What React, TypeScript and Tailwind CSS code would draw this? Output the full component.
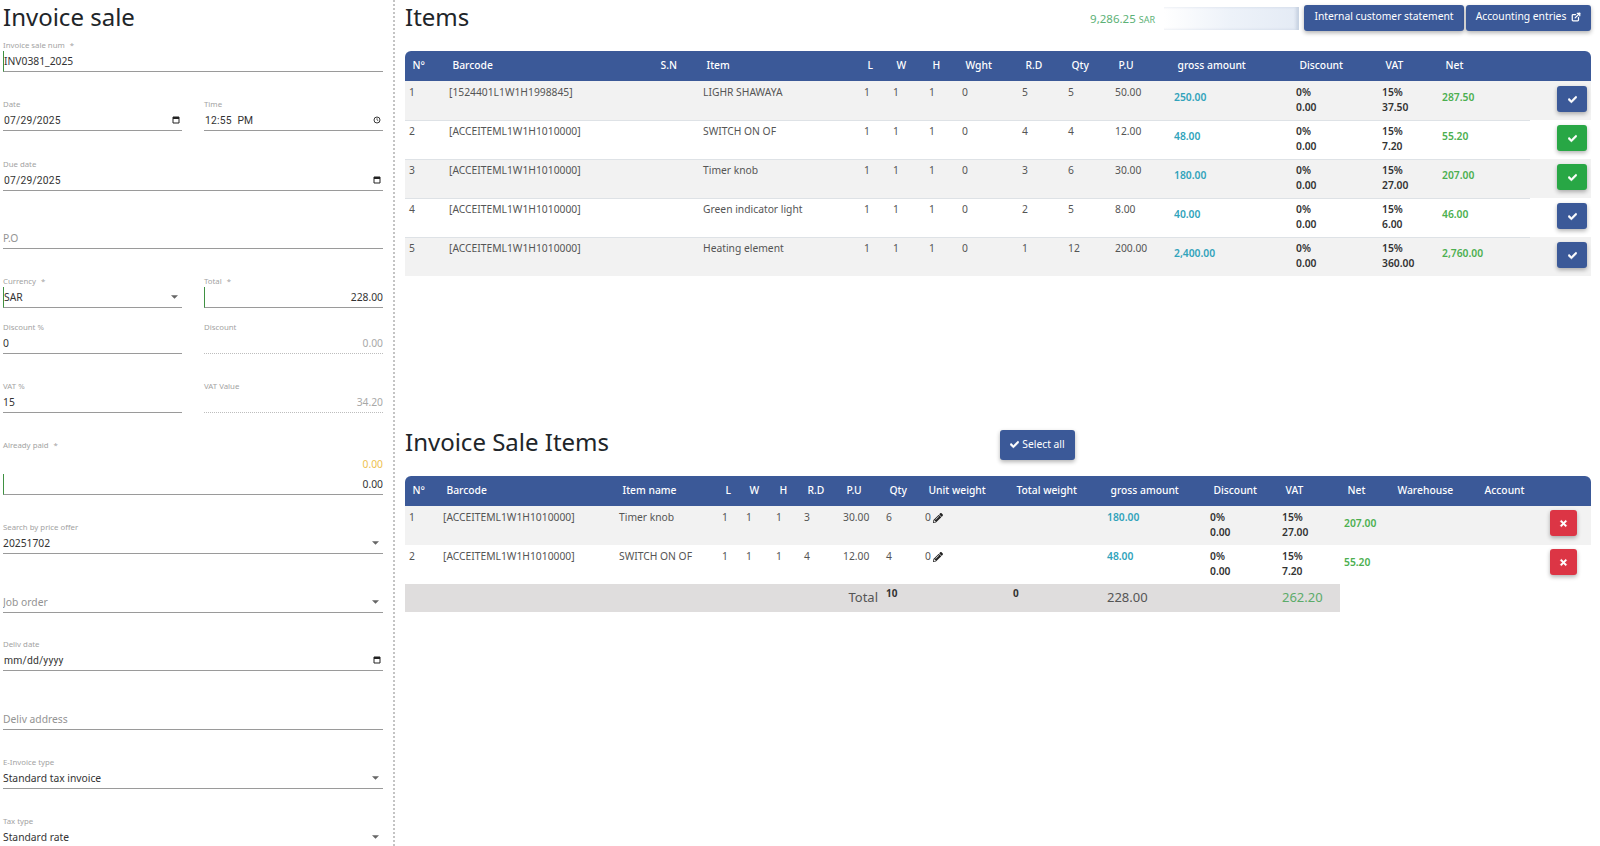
import React from "react";
import { FaCheck, FaTimes, FaPencilAlt } from "react-icons/fa";
import { ExternalLink } from "lucide-react";

const font = "font-['Noto_Sans',sans-serif]";

function CalendarIcon() {
  return (
    <svg viewBox="0 0 8 8" className="mr-[2px] h-[8px] w-[8px] shrink-0">
      <path d="M1 1h6v6H1z" fill="none" stroke="#222" strokeWidth="1" />
      <path d="M1 1h6v2H1z" fill="#222" />
    </svg>
  );
}
function ClockIcon() {
  return (
    <svg viewBox="0 0 8 8" className="mr-[2px] h-[8px] w-[8px] shrink-0">
      <circle cx="4" cy="4" r="3" fill="none" stroke="#222" strokeWidth="0.9" />
      <path d="M4 2.2V4l1.3.8" fill="none" stroke="#222" strokeWidth="0.7" />
    </svg>
  );
}
function Caret() {
  return (
    <svg viewBox="0 0 8 4" className="mr-[4px] h-[4px] w-[7px] shrink-0">
      <path d="M0 0h8L4 4z" fill="#666" />
    </svg>
  );
}

type FieldProps = {
  label?: string;
  value?: string;
  top: string;
  kind?: "text" | "placeholder" | "date";
  required?: boolean;
  marker?: boolean;
  disabled?: boolean;
  right?: boolean;
  icon?: React.ReactNode;
  extra?: React.ReactNode;
};

function Field({ label, value, top, kind = "text", required, marker, disabled, right, icon, extra }: FieldProps) {
  const valueClass =
    kind === "placeholder"
      ? "text-[#939393]"
      : disabled
        ? "text-[#a8a8a8]"
        : "text-[#333]";
  return (
    <div className={`min-w-0 flex-1 ${top}`}>
      <div className="flex h-[12px] items-center text-[7.8px] leading-[12px] text-[#a3a3a3]">
        {label}
        {required ? <span className="ml-[5px]">*</span> : null}
      </div>
      {extra}
      <div
        className={`flex h-[21px] items-center ${
          disabled ? "border-b border-dotted border-[#bdbdbd]" : "border-b border-[#9a9a9a]"
        } ${marker ? "border-l border-l-[#3f9142]" : ""}`}
      >
        <div
          className={`min-w-0 flex-1 truncate pt-[2px] ${right ? "text-right" : ""} ${
            kind === "date"
              ? "pl-px font-['Roboto',sans-serif] text-[10.3px] tracking-[0.2px] [word-spacing:3px]"
              : "text-[10.3px]"
          } ${valueClass}`}
        >
          {value}
        </div>
        {icon}
      </div>
    </div>
  );
}

const Row = ({ children }: { children: React.ReactNode }) => <div className="flex gap-[22px]">{children}</div>;

function ActionButton({ green }: { green?: boolean }) {
  return (
    <button
      className={`flex h-[26px] w-[30px] items-center justify-center rounded-[3px] text-white shadow-[0_2px_4px_rgba(0,0,0,0.3)] ${
        green ? "bg-[#28a745]" : "bg-[#3b5998]"
      }`}
    >
      <FaCheck className="h-[9px] w-[9px]" stroke="currentColor" strokeWidth={30} />
    </button>
  );
}

function RemoveButton() {
  return (
    <button className="flex h-[26px] w-[27px] items-center justify-center rounded-[3px] bg-[#dc3545] text-white shadow-[0_2px_4px_rgba(0,0,0,0.3)]">
      <FaTimes className="h-[9px] w-[9px]" stroke="currentColor" strokeWidth={30} />
    </button>
  );
}

const th = "bg-[#3b5998] pl-[7.5px] text-left text-[10.3px] font-medium text-white h-[30px] align-middle whitespace-nowrap";
const td = "pl-[4px] pt-[4px] pb-[4px] align-top text-[10.3px] leading-[15px] text-[#555] whitespace-nowrap";
const td1 = "pl-[4px] pt-[3px] pb-[5px] align-top text-[10.3px] leading-[15px] text-[#555] whitespace-nowrap";

const items = [
  { n: 1, code: "[1524401L1W1H1998845]", name: "LIGHR SHAWAYA", rd: 5, qty: 5, pu: "50.00", gross: "250.00", vat: "37.50", net: "287.50", green: false },
  { n: 2, code: "[ACCEITEML1W1H1010000]", name: "SWITCH ON OF", rd: 4, qty: 4, pu: "12.00", gross: "48.00", vat: "7.20", net: "55.20", green: true },
  { n: 3, code: "[ACCEITEML1W1H1010000]", name: "Timer knob", rd: 3, qty: 6, pu: "30.00", gross: "180.00", vat: "27.00", net: "207.00", green: true },
  { n: 4, code: "[ACCEITEML1W1H1010000]", name: "Green indicator light", rd: 2, qty: 5, pu: "8.00", gross: "40.00", vat: "6.00", net: "46.00", green: false },
  { n: 5, code: "[ACCEITEML1W1H1010000]", name: "Heating element", rd: 1, qty: 12, pu: "200.00", gross: "2,400.00", vat: "360.00", net: "2,760.00", green: false },
];

const saleItems = [
  { n: 1, code: "[ACCEITEML1W1H1010000]", name: "Timer knob", rd: 3, pu: "30.00", qty: 6, gross: "180.00", vat: "27.00", net: "207.00" },
  { n: 2, code: "[ACCEITEML1W1H1010000]", name: "SWITCH ON OF", rd: 4, pu: "12.00", qty: 4, gross: "48.00", vat: "7.20", net: "55.20" },
];

const itemHead = ["N°", "Barcode", "S.N", "Item", "L", "W", "H", "Wght", "R.D", "Qty", "P.U", "gross amount", "Discount", "VAT", "Net", ""];
const saleHead = ["N°", "Barcode", "Item name", "L", "W", "H", "R.D", "P.U", "Qty", "Unit weight", "Total weight", "gross amount", "Discount", "VAT", "Net", "Warehouse", "Account", ""];

function Head({ cells }: { cells: string[] }) {
  return (
    <thead>
      <tr>
        {cells.map((c, i) => (
          <th
            key={i}
            className={`${th} ${i === 0 ? "rounded-tl-md" : ""} ${i === cells.length - 1 ? "rounded-tr-md" : ""}`}
          >
            {c}
          </th>
        ))}
      </tr>
    </thead>
  );
}

function Stack({ a, b }: { a: string; b: string }) {
  return (
    <td className={`${td} font-semibold !text-[#333]`}>
      <div>{a}</div>
      <div>{b}</div>
    </td>
  );
}

export default function App() {
  return (
    <div className={`flex h-[846px] w-[1600px] overflow-hidden bg-white ${font}`}>
      <aside className="h-full w-[395px] shrink-0 border-r-2 border-dotted border-[#c4c4c4] pl-[3px] pr-[10px]">
        <h1 className="h-[39px] pt-[2px] text-[24px] leading-[29px] text-[#212529]">Invoice sale</h1>
        <Field top="" label="Invoice sale num" required marker value="INV0381_2025" />
        <Row>
          <Field top="mt-[26px]" label="Date" kind="date" value="07/29/2025" icon={<CalendarIcon />} />
          <Field top="mt-[26px]" label="Time" kind="date" value="12:55 PM" icon={<ClockIcon />} />
        </Row>
        <Field top="mt-[27px]" label="Due date" kind="date" value="07/29/2025" icon={<CalendarIcon />} />
        <Field top="mt-[25px]" kind="placeholder" value="P.O" />
        <Row>
          <Field top="mt-[26px]" label="Currency" required marker value="SAR" icon={<Caret />} />
          <Field top="mt-[26px]" label="Total" required marker right value="228.00" />
        </Row>
        <Row>
          <Field top="mt-[13px]" label="Discount %" value="0" />
          <Field top="mt-[13px]" label="Discount" disabled right value="0.00" />
        </Row>
        <Row>
          <Field top="mt-[26px]" label="VAT %" value="15" />
          <Field top="mt-[26px]" label="VAT Value" disabled right value="34.20" />
        </Row>
        <Field
          top="mt-[26px]"
          label="Already paid"
          required
          marker
          right
          value="0.00"
          extra={<div className="mb-[3px] mt-[6px] h-[14px] text-right text-[10.3px] leading-[14px] text-[#eec14f]">0.00</div>}
        />
        <Field top="mt-[26px]" label="Search by price offer" value="20251702" icon={<Caret />} />
        <Field top="mt-[26px]" kind="placeholder" value="Job order" icon={<Caret />} />
        <Field top="mt-[25px]" label="Deliv date" kind="date" value="mm/dd/yyyy" icon={<CalendarIcon />} />
        <Field top="mt-[26px]" kind="placeholder" value="Deliv address" />
        <Field top="mt-[26px]" label="E-Invoice type" value="Standard tax invoice" icon={<Caret />} />
        <Field top="mt-[26px]" label="Tax type" value="Standard rate" icon={<Caret />} />
      </aside>

      <main className="min-w-0 flex-1 pl-[10px] pr-[9px]">
        <div className="flex h-[51px] items-start">
          <h2 className="pt-[2px] text-[24px] leading-[29px] text-[#212529]">Items</h2>
          <div className="ml-auto mt-[5px] flex items-start">
            <div className="mr-[9px] mt-[5px] text-[11.5px] leading-[18px] text-[#5cb176]">
              9,286.25 <span className="text-[9px]">SAR</span>
            </div>
            <div className="mr-[5px] mt-[2px] h-[23px] w-[135px] bg-gradient-to-r from-white via-[#edf2f9] to-[#e4ebf5] shadow-[inset_-3px_0_3px_rgba(120,140,170,0.25)]" />
            <button className="h-[26px] w-[160px] rounded-[3px] bg-[#3b5998] pb-[2px] text-[10.3px] text-white shadow-[0_2px_4px_rgba(0,0,0,0.3)]">
              Internal customer statement
            </button>
            <button className="ml-[2px] flex h-[26px] w-[125px] items-center justify-center gap-[5px] rounded-[3px] bg-[#3b5998] pb-[2px] text-[10.3px] text-white shadow-[0_2px_4px_rgba(0,0,0,0.3)]">
              Accounting entries
              <ExternalLink className="h-[10px] w-[10px]" strokeWidth={3} />
            </button>
          </div>
        </div>

        <table className="w-[1186px] table-fixed border-separate border-spacing-0">
          <colgroup>
            <col className="w-[40px]" />
            <col className="w-[208px]" />
            <col className="w-[46px]" />
            <col className="w-[161px]" />
            <col className="w-[29px]" />
            <col className="w-[36px]" />
            <col className="w-[33px]" />
            <col className="w-[60px]" />
            <col className="w-[46px]" />
            <col className="w-[47px]" />
            <col className="w-[59px]" />
            <col className="w-[122px]" />
            <col className="w-[86px]" />
            <col className="w-[60px]" />
            <col className="w-[92px]" />
            <col className="w-[61px]" />
          </colgroup>
          <Head cells={itemHead} />
          <tbody>
            {items.map((r) => {
              const bg = r.n % 2 === 1 ? "bg-[#f2f2f2]" : "bg-white";
              const line = r.n === 1 ? "border-t border-transparent" : "border-t border-[#dee2e6]";
              return (
                <tr key={r.n} className={bg}>
                  <td className={`${td1} ${line}`}>{r.n}</td>
                  <td className={`${td1} ${line}`}>{r.code}</td>
                  <td className={`${td1} ${line}`} />
                  <td className={`${td1} ${line}`}>{r.name}</td>
                  <td className={`${td1} ${line}`}>1</td>
                  <td className={`${td1} ${line}`}>1</td>
                  <td className={`${td1} ${line}`}>1</td>
                  <td className={`${td1} ${line}`}>0</td>
                  <td className={`${td1} ${line}`}>{r.rd}</td>
                  <td className={`${td1} ${line}`}>{r.qty}</td>
                  <td className={`${td1} ${line}`}>{r.pu}</td>
                  <td className={`${td1} ${line} !pt-[8px] font-semibold !text-[#31a3bb]`}>{r.gross}</td>
                  <td className={`${td1} ${line} font-semibold !text-[#333]`}>
                    <div>0%</div>
                    <div>0.00</div>
                  </td>
                  <td className={`${td1} ${line} font-semibold !text-[#333]`}>
                    <div>15%</div>
                    <div>{r.vat}</div>
                  </td>
                  <td className={`${td1} ${line} !pt-[8px] font-semibold !text-[#4caf50]`}>{r.net}</td>
                  <td className="pl-[27px] pt-[5px] align-top">
                    <ActionButton green={r.green} />
                  </td>
                </tr>
              );
            })}
          </tbody>
        </table>

        <div className="mt-[150px] flex h-[50px] items-start">
          <h2 className="pt-[1px] text-[24px] leading-[29px] text-[#212529]">Invoice Sale Items</h2>
          <button className="ml-auto mr-[516px] mt-[4px] flex h-[30px] w-[75px] items-center justify-center gap-[3px] rounded-[3px] bg-[#3b5998] pb-[1px] text-[10.3px] text-white shadow-[0_2px_4px_rgba(0,0,0,0.3)]">
            <FaCheck className="h-[9px] w-[9px]" stroke="currentColor" strokeWidth={30} />
            Select all
          </button>
        </div>

        <table className="w-[1186px] table-fixed border-separate border-spacing-0">
          <colgroup>
            <col className="w-[34px]" />
            <col className="w-[176px]" />
            <col className="w-[103px]" />
            <col className="w-[24px]" />
            <col className="w-[30px]" />
            <col className="w-[28px]" />
            <col className="w-[39px]" />
            <col className="w-[43px]" />
            <col className="w-[39px]" />
            <col className="w-[88px]" />
            <col className="w-[94px]" />
            <col className="w-[103px]" />
            <col className="w-[72px]" />
            <col className="w-[62px]" />
            <col className="w-[50px]" />
            <col className="w-[87px]" />
            <col className="w-[63px]" />
            <col className="w-[51px]" />
          </colgroup>
          <Head cells={saleHead} />
          <tbody>
            {saleItems.map((r) => (
              <tr key={r.n} className={`h-[39px] ${r.n === 1 ? "bg-[#f2f2f2]" : "bg-white"}`}>
                <td className={td}>{r.n}</td>
                <td className={td}>{r.code}</td>
                <td className={td}>{r.name}</td>
                <td className={td}>1</td>
                <td className={td}>1</td>
                <td className={td}>1</td>
                <td className={td}>{r.rd}</td>
                <td className={td}>{r.pu}</td>
                <td className={td}>{r.qty}</td>
                <td className={td}>
                  <span className="inline-flex items-center gap-[2px]">
                    0
                    <FaPencilAlt className="h-[10px] w-[10px] text-[#222]" />
                  </span>
                </td>
                <td className={td} />
                <td className={`${td} font-semibold !text-[#31a3bb]`}>{r.gross}</td>
                <Stack a="0%" b="0.00" />
                <Stack a="15%" b={r.vat} />
                <td className={`${td} !pt-[10px] font-semibold !text-[#4caf50]`}>{r.net}</td>
                <td className={td} />
                <td className={td} />
                <td className="pl-[10px] pt-[4px] align-top">
                  <RemoveButton />
                </td>
              </tr>
            ))}
            <tr>
              <td colSpan={8} className="h-[28px] bg-[#dfdddd] pr-[4px] text-right align-middle text-[13px] text-[#555]">
                Total
              </td>
              <td className="bg-[#dfdddd] pl-[4px] pt-[2px] align-top text-[10px] font-bold leading-[15px] text-[#333]">10</td>
              <td className="bg-[#dfdddd]" />
              <td className="bg-[#dfdddd] pl-[4px] pt-[2px] align-top text-[10px] font-bold leading-[15px] text-[#333]">0</td>
              <td className="bg-[#dfdddd] pl-[4px] align-middle text-[13px] text-[#555]">228.00</td>
              <td className="bg-[#dfdddd]" />
              <td className="bg-[#dfdddd] pl-[4px] align-middle text-[13px] text-[#5cab6a]">262.20</td>
            </tr>
          </tbody>
        </table>
      </main>
    </div>
  );
}
